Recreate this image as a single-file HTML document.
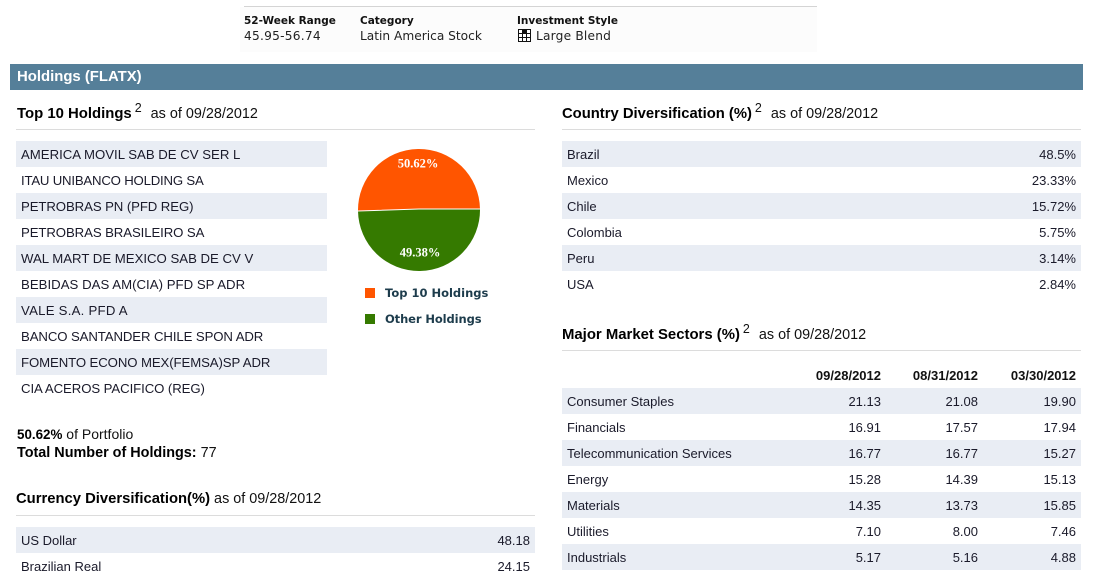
<!DOCTYPE html>
<html><head><meta charset="utf-8">
<style>
html,body{margin:0;padding:0;background:#fff;}
#p{position:relative;width:1101px;height:578px;overflow:hidden;font-family:"Liberation Sans",Arial,sans-serif;font-size:13px;color:#1a1a2a;}
#p div{position:absolute;white-space:nowrap;}
.r{height:26px;line-height:28px;}
.s{background:#e9edf4;}
.l{left:21px;width:300px;font-size:13.2px;}
.rl{left:562px;width:519px;}
.rl span,.cl span{position:absolute;top:0;}
.rl .n{left:5px;}
.rl .v{right:5px;}
.rl .a{right:200px;}.rl .b{right:103px;}.rl .c{right:5px;}
.cl{left:16px;width:519px;}
.cl .n{left:5px;}.cl .v{right:5px;}
.h{font-size:14.4px;line-height:18px;color:#111;}
.h b{font-size:14.9px;color:#000;}
.h sup{font-size:12.5px;line-height:0;position:relative;top:0;left:-1px;vertical-align:super;}
.hr{height:1px;background:#dcdcdc;}
.t{font:bold 10.5px/12px "DejaVu Sans",Verdana,sans-serif;color:#111;}
.d{font:12.2px/16px "DejaVu Sans",Verdana,sans-serif;color:#222;}
.lg{font:bold 11.5px/14px "DejaVu Sans",Verdana,sans-serif;color:#1d3c4c;}
</style></head><body><div id="p">

<div style="left:240px;top:7px;width:577px;height:45px;background:#fcfcfc"></div>
<div style="left:244px;top:6px;width:573px;height:1px;background:#d4d4d4"></div>
<div class="t" style="left:244px;top:15px">52-Week Range</div>
<div class="d" style="left:244px;top:28px;letter-spacing:.25px">45.95-56.74</div>
<div class="t" style="left:360px;top:15px">Category</div>
<div class="d" style="left:360px;top:28px">Latin America Stock</div>
<div class="t" style="left:517px;top:15px">Investment Style</div>
<svg style="position:absolute;left:518px;top:29px" width="14" height="14" viewBox="0 0 14 14"><rect x="0.5" y="0.5" width="12" height="12" fill="#fff" stroke="#111"/><rect x="4.5" y="0.5" width="4" height="4" fill="#111"/><path d="M4.5 0V13M8.5 0V13M0 4.5H13M0 8.5H13" stroke="#111" fill="none"/></svg>
<div class="d" style="left:536px;top:28px;letter-spacing:.2px">Large Blend</div>

<div style="left:10px;top:64px;width:1073px;height:26px;background:#557f99;color:#fff;font-weight:bold;font-size:14.9px;line-height:26px;text-indent:7px">Holdings (FLATX)</div>

<div class="h" style="left:17px;top:105px"><b>Top 10 Holdings</b> <sup>2</sup>&nbsp; as of 09/28/2012</div>
<div class="hr" style="left:16px;top:129px;width:519px"></div>

<div class="r s" style="left:16px;top:141px;width:311px"></div>
<div class="r s" style="left:16px;top:193px;width:311px"></div>
<div class="r s" style="left:16px;top:245px;width:311px"></div>
<div class="r s" style="left:16px;top:297px;width:311px"></div>
<div class="r s" style="left:16px;top:349px;width:311px"></div>
<div class="r l" style="top:141px">AMERICA MOVIL SAB DE CV SER L</div>
<div class="r l" style="top:167px;letter-spacing:-.2px">ITAU UNIBANCO HOLDING SA</div>
<div class="r l" style="top:193px;letter-spacing:-.09px">PETROBRAS PN (PFD REG)</div>
<div class="r l" style="top:219px;letter-spacing:-.09px">PETROBRAS BRASILEIRO SA</div>
<div class="r l" style="top:245px">WAL MART DE MEXICO SAB DE CV V</div>
<div class="r l" style="top:271px;letter-spacing:.03px">BEBIDAS DAS AM(CIA) PFD SP ADR</div>
<div class="r l" style="top:297px;letter-spacing:.25px">VALE S.A. PFD A</div>
<div class="r l" style="top:323px;letter-spacing:-.1px">BANCO SANTANDER CHILE SPON ADR</div>
<div class="r l" style="top:349px;letter-spacing:-.1px">FOMENTO ECONO MEX(FEMSA)SP ADR</div>
<div class="r l" style="top:375px;letter-spacing:-.08px">CIA ACEROS PACIFICO (REG)</div>

<svg style="position:absolute;left:350px;top:140px" width="140" height="140" viewBox="0 0 140 140">
<path d="M69 69 L8 71 A61 61 0 1 1 130 69 Z" fill="#ff5500"/>
<path d="M8 71 A61 61 0 0 0 130 69 L69 69 Z" fill="#357a00"/>
<path d="M8 71 L69 69 L130 69" stroke="#fff" stroke-width="1" fill="none"/>
<text x="68" y="27.5" text-anchor="middle" font-family="Liberation Serif,serif" font-weight="bold" font-size="12.5" fill="#fff">50.62%</text>
<text x="70" y="116.5" text-anchor="middle" font-family="Liberation Serif,serif" font-weight="bold" font-size="12.5" fill="#fff">49.38%</text>
</svg>
<div style="left:365px;top:288px;width:10px;height:10px;background:#ff5500"></div>
<div class="lg" style="left:385px;top:286px">Top 10 Holdings</div>
<div style="left:365px;top:314px;width:10px;height:10px;background:#357a00"></div>
<div class="lg" style="left:385px;top:312px;letter-spacing:-.1px">Other Holdings</div>

<div class="h" style="left:17px;top:425px;font-size:14px"><b style="font-size:13.4px">50.62%</b> of Portfolio</div>
<div class="h" style="left:17px;top:444px"><b style="font-size:14.4px">Total Number of Holdings:</b> 77</div>

<div class="h" style="left:16px;top:490px"><b style="font-size:14.8px">Currency Diversification(%)</b> as of 09/28/2012</div>
<div class="hr" style="left:16px;top:515px;width:519px"></div>
<div class="r cl s" style="top:527px"><span class="n">US Dollar</span><span class="v">48.18</span></div>
<div class="r cl" style="top:553px"><span class="n">Brazilian Real</span><span class="v">24.15</span></div>

<div class="h" style="left:562px;top:105px"><b style="font-size:14.8px">Country Diversification (%)</b> <sup>2</sup>&nbsp; as of 09/28/2012</div>
<div class="hr" style="left:562px;top:129px;width:519px"></div>
<div class="r rl s" style="top:141px"><span class="n">Brazil</span><span class="v">48.5%</span></div>
<div class="r rl" style="top:167px"><span class="n">Mexico</span><span class="v">23.33%</span></div>
<div class="r rl s" style="top:193px"><span class="n">Chile</span><span class="v">15.72%</span></div>
<div class="r rl" style="top:219px"><span class="n">Colombia</span><span class="v">5.75%</span></div>
<div class="r rl s" style="top:245px"><span class="n">Peru</span><span class="v">3.14%</span></div>
<div class="r rl" style="top:271px"><span class="n">USA</span><span class="v">2.84%</span></div>

<div class="h" style="left:562px;top:326px"><b>Major Market Sectors (%)</b> <sup>2</sup>&nbsp; as of 09/28/2012</div>
<div class="hr" style="left:562px;top:350px;width:519px"></div>
<div class="r rl" style="top:362px;font-weight:bold;color:#111"><span class="a">09/28/2012</span><span class="b">08/31/2012</span><span class="c">03/30/2012</span></div>
<div class="r rl s" style="top:388px"><span class="n">Consumer Staples</span><span class="a">21.13</span><span class="b">21.08</span><span class="c">19.90</span></div>
<div class="r rl" style="top:414px"><span class="n">Financials</span><span class="a">16.91</span><span class="b">17.57</span><span class="c">17.94</span></div>
<div class="r rl s" style="top:440px"><span class="n">Telecommunication Services</span><span class="a">16.77</span><span class="b">16.77</span><span class="c">15.27</span></div>
<div class="r rl" style="top:466px"><span class="n">Energy</span><span class="a">15.28</span><span class="b">14.39</span><span class="c">15.13</span></div>
<div class="r rl s" style="top:492px"><span class="n">Materials</span><span class="a">14.35</span><span class="b">13.73</span><span class="c">15.85</span></div>
<div class="r rl" style="top:518px"><span class="n">Utilities</span><span class="a">7.10</span><span class="b">8.00</span><span class="c">7.46</span></div>
<div class="r rl s" style="top:544px"><span class="n">Industrials</span><span class="a">5.17</span><span class="b">5.16</span><span class="c">4.88</span></div>

</div></body></html>
